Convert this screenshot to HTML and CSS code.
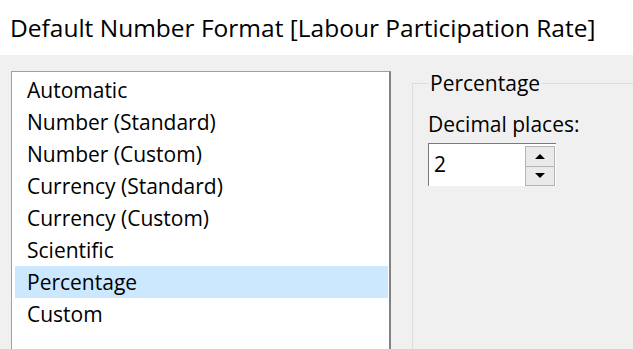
FILE: index.html
```html
<!DOCTYPE html>
<html lang="en">
<head>
  <meta charset="UTF-8">
  <title>Default Number Format</title>
  <link rel="stylesheet" href="styles.css">
</head>
<body>

  <div class="title">Default Number Format [Labour Participation Rate]</div>

  <div class="dialog">
    <div class="format-list">
      <div class="item">Automatic</div>
      <div class="item">Number (Standard)</div>
      <div class="item">Number (Custom)</div>
      <div class="item">Currency (Standard)</div>
      <div class="item">Currency (Custom)</div>
      <div class="item">Scientific</div>
      <div class="item selected">Percentage</div>
      <div class="item">Custom</div>
    </div>

    <fieldset class="options">
      <legend>Percentage</legend>
      <div class="label">Decimal places:</div>
      <div class="spin">
        <div class="spin-value">2</div>
        <div class="spin-buttons">
          <div class="spin-btn"><span class="arrow up"></span></div>
          <div class="spin-btn"><span class="arrow down"></span></div>
        </div>
      </div>
    </fieldset>
  </div>

</body>
</html>
```

FILE: styles.css
```css
body {
  margin: 0;
  font-family: 'Open Sans', sans-serif;
  background: #f0f0f0;
  color: #000;
  overflow: hidden;
  height: 349px;
}

.title {
  height: 55px;
  background: #fff;
  font-size: 24.5px;
  line-height: 55px;
  padding-left: 10px;
  box-sizing: border-box;
  white-space: nowrap;
}

.dialog {
  display: flex;
  align-items: flex-start;
  padding: 16px 0 0 11px;
  height: 278px;
  overflow: hidden;
}

.format-list {
  width: 373px;
  height: 300px;
  background: #fff;
  border-top: 1px solid #a0a0a0;
  border-left: 1px solid #a0a0a0;
  border-right: 2px solid #828287;
  padding: 2px 1px 0 3px;
  flex-shrink: 0;
}

.item {
  height: 32px;
  line-height: 32px;
  font-size: 21px;
  padding-left: 12px;
}

.item.selected {
  background: #cce8ff;
}

.options {
  margin: 2px 0 0 21px;
  padding: 0 0 300px 15px;
  border: 1px solid #dcdcdc;
  border-right: none;
  width: 220px;
  flex-shrink: 0;
}

.options legend {
  font-size: 21px;
  line-height: 20px;
  padding: 0 2px;
}

.label {
  font-size: 21px;
  margin-top: 17px;
  line-height: 28px;
}

.spin {
  display: flex;
  width: 127px;
  height: 42px;
  margin-top: 5px;
  background: #fff;
  border-top: 1px solid #7a7a7a;
  border-left: 1px solid #7a7a7a;
}

.spin-value {
  flex: 1;
  font-size: 21px;
  line-height: 40px;
  padding-left: 5px;
}

.spin-buttons {
  display: flex;
  flex-direction: column;
  margin: 2px 1px 0 0;
  width: 30px;
}

.spin-btn {
  height: 19px;
  background: #eaeaea;
  border: 1px solid #b4b4b4;
  display: flex;
  align-items: center;
  justify-content: center;
}

.spin-btn + .spin-btn {
  border-top: none;
}

.arrow {
  width: 0;
  height: 0;
  border-left: 5px solid transparent;
  border-right: 5px solid transparent;
}

.arrow.up {
  border-bottom: 5px solid #000;
}

.arrow.down {
  border-top: 5px solid #000;
}
```
